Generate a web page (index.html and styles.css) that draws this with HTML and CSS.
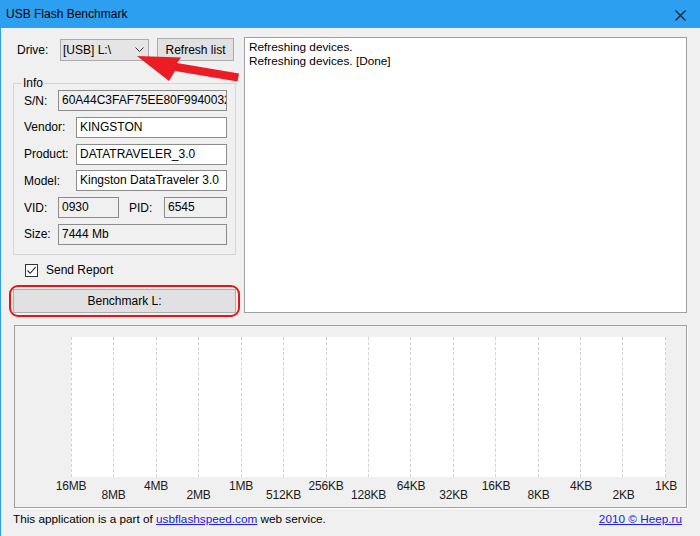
FILE: index.html
```html
<!DOCTYPE html>
<html>
<head>
<meta charset="utf-8">
<title>USB Flash Benchmark</title>
<link rel="stylesheet" href="styles.css">
</head>
<body>
<div class="window">
  <div class="titlebar">
    <span class="title">USB Flash Benchmark</span>
    <svg class="close" width="11" height="11" viewBox="0 0 11 11"><path d="M0.5 0.5 L10.5 10.5 M10.5 0.5 L0.5 10.5" stroke="#1a1a1a" stroke-width="1.1" fill="none"/></svg>
  </div>
  <div class="main">
    <div class="top">
      <div class="left">
        <div class="drive-row">
          <span class="drive-lbl">Drive:</span>
          <div class="combo"><span>[USB] L:\</span><svg width="9" height="5" viewBox="0 0 9 5"><path d="M0.5 0.5 L4.5 4.5 L8.5 0.5" stroke="#333" stroke-width="1" fill="none"/></svg></div>
          <button class="btn refresh">Refresh list</button>
        </div>
        <div class="group">
          <div class="legend">Info</div>
          <div class="row"><span class="lbl w34">S/N:</span><div class="tb ro w169">60A44C3FAF75EE80F9940032</div></div>
          <div class="row"><span class="lbl w52">Vendor:</span><div class="tb w151">KINGSTON</div></div>
          <div class="row"><span class="lbl w52">Product:</span><div class="tb w151">DATATRAVELER_3.0</div></div>
          <div class="row"><span class="lbl w52">Model:</span><div class="tb w151">Kingston DataTraveler 3.0</div></div>
          <div class="row"><span class="lbl w34">VID:</span><div class="tb ro w61">0930</div><span class="lbl pid">PID:</span><div class="tb ro w63">6545</div></div>
          <div class="row"><span class="lbl w34">Size:</span><div class="tb ro w169">7444 Mb</div></div>
        </div>
        <div class="check-row">
          <span class="checkbox"><svg width="11" height="11" viewBox="0 0 11 11"><path d="M1.5 5.5 L4.2 8.3 L9.6 2.2" stroke="#222" stroke-width="1.1" fill="none"/></svg></span>
          <span class="check-text">Send Report</span>
        </div>
        <div class="highlight"><button class="btn bench">Benchmark L:</button></div>
      </div>
      <div class="log">
        <div>Refreshing devices.</div>
        <div>Refreshing devices. [Done]</div>
      </div>
    </div>
    <div class="chart">
      <div class="plot">
        <div class="cell"></div><div class="cell"></div><div class="cell"></div><div class="cell"></div><div class="cell"></div><div class="cell"></div><div class="cell"></div>
        <div class="cell"></div><div class="cell"></div><div class="cell"></div><div class="cell"></div><div class="cell"></div><div class="cell"></div><div class="cell"></div>
      </div>
      <div class="labels">
        <span class="up">16MB</span><span class="down">8MB</span><span class="up">4MB</span><span class="down">2MB</span><span class="up">1MB</span><span class="down">512KB</span><span class="up">256KB</span><span class="down">128KB</span><span class="up">64KB</span><span class="down">32KB</span><span class="up">16KB</span><span class="down">8KB</span><span class="up">4KB</span><span class="down">2KB</span><span class="up">1KB</span>
      </div>
    </div>
    <div class="footer">
      <span>This application is a part of <a href="#">usbflashspeed.com</a> web service.</span>
      <a href="#">2010 © Heep.ru</a>
    </div>
  </div>
  <svg class="arrow" width="700" height="536" viewBox="0 0 700 536"><path d="M137 56 L181 57.5 L177 63 L239 73.5 L237.5 81.5 L175 71 L169 81 Z" fill="#ec1c24"/></svg>
</div>
</body>
</html>
```
FILE: styles.css
```css
* { box-sizing: border-box; }
html, body { margin: 0; padding: 0; }
body {
  width: 700px;
  height: 536px;
  overflow: hidden;
  background: #f0f0f0;
  font-family: "Liberation Sans", Arial, sans-serif;
  font-size: 12px;
  color: #000;
}
.window {
  position: relative;
  width: 700px;
  height: 536px;
  border-left: 1px solid #2d9ff0;
}
.titlebar {
  height: 28px;
  margin-left: -1px;
  background: #2d9ff0;
  display: flex;
  align-items: center;
  justify-content: space-between;
  padding: 0 14px 0 6px;
}
.title { font-size: 12px; color: #000; line-height: 28px; }
.close { display: block; margin-top: 3px; }
.main { padding: 9px 13px 0 12px; }
.top {
  display: grid;
  grid-template-columns: 223px 443px;
  column-gap: 8px;
  align-items: start;
}
.left { display: flex; flex-direction: column; }
.drive-row { height: 25px; display: flex; align-items: center; }
.drive-lbl { width: 47px; padding-left: 4px; }
.combo {
  width: 89px; height: 22px;
  background: #e5e5e5;
  border: 1px solid #acacac;
  display: flex; align-items: center; justify-content: space-between;
  padding: 0 4px 0 2px;
}
.btn {
  font-family: "Liberation Sans", Arial, sans-serif;
  font-size: 12px;
  color: #000;
  background: #e1e1e1;
  border: 1px solid #adadad;
  padding: 0;
  margin: 0;
}
.refresh { width: 77px; height: 23px; margin-left: 8px; }
.group {
  margin-top: 21px;
  border: 1px solid #d5d5d5;
  padding: 6px 8px 9px 10px;
  display: flex; flex-direction: column; gap: 5.75px;
}
.legend {
  width: fit-content;
  height: 14px; line-height: 14px;
  margin: -14px 0 -5.75px -2px;
  padding: 0 1px;
  background: #f0f0f0;
}
.row { height: 21px; display: flex; align-items: center; }
.lbl { white-space: nowrap; }
.w34 { width: 34px; }
.w52 { width: 52px; }
.pid { width: 35px; margin-left: 10px; }
.tb {
  height: 21px;
  line-height: 19px;
  border: 1px solid #8c8c8c;
  background: #fff;
  padding-left: 3px;
  white-space: nowrap;
  overflow: hidden;
}
.tb.ro { background: #f0f0f0; }
.w169 { width: 169px; }
.w151 { width: 151px; }
.w61 { width: 61px; }
.w63 { width: 63px; }
.check-row { margin-top: 9px; height: 13px; display: flex; align-items: center; padding-left: 12px; }
.checkbox {
  width: 13px; height: 13px;
  border: 1px solid #333;
  background: #fff;
  display: flex; align-items: center; justify-content: center;
}
.checkbox svg { display: block; }
.check-text { margin-left: 8px; }
.highlight {
  margin: 8px 0 -4px -4px;
  width: 231px;
  border: 2px solid #e3151b;
  border-radius: 9px;
  padding: 2px;
}
.bench { display: block; width: 223px; height: 24px; }
.log {
  height: 276px;
  background: #fff;
  border: 1px solid #a0a0a0;
  padding: 2px 4px;
  line-height: 14px;
  font-size: 11.8px;
}
.chart {
  margin: 12px 0 0 1px;
  width: 673px;
  height: 183px;
  border: 1px solid #a0a0a0;
  box-shadow: 1px 1px 0 #fff;
  padding-top: 11px;
}
.plot {
  margin-left: 56px;
  width: 595px;
  height: 140px;
  background: #fff;
  display: flex;
}
.cell { flex: 1; border-left: 1px dashed #d2d2d2; }
.cell:last-child { border-right: 1px dashed #d2d2d2; }
.labels {
  margin: 2.5px 0 0 34.75px;
  display: flex;
  align-items: flex-start;
  font-size: 12px;
  letter-spacing: -0.2px;
}
.labels span {
  flex: none;
  width: 42.5px;
  text-align: center;
  white-space: nowrap;
  line-height: 12px;
  color: #1a1a1a;
}
.labels .down { margin-top: 9.5px; }
.footer {
  margin: 4px 5px 0 0;
  height: 14px; line-height: 14px;
  display: flex; justify-content: space-between;
  font-size: 11.75px;
}
.footer a { color: #2020e6; text-decoration: underline; }
.arrow { position: absolute; left: -1px; top: 0; pointer-events: none; }
```
